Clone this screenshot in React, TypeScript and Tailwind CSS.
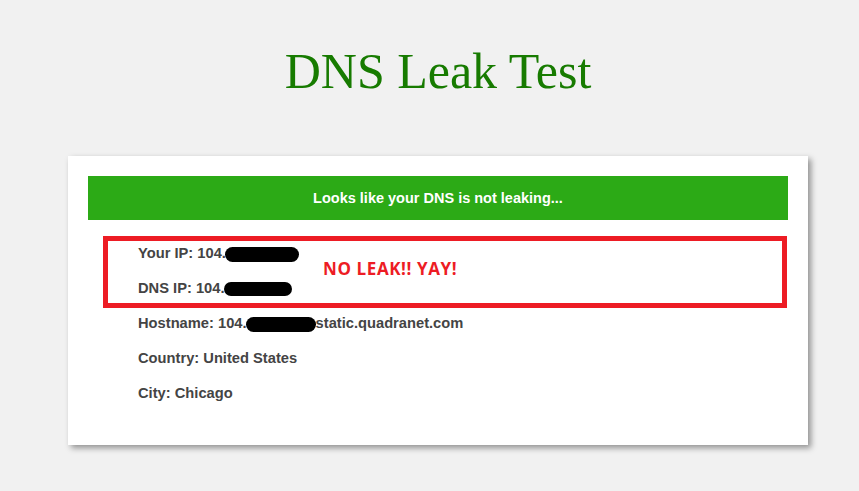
import React from "react";

function Blob({ w, h = 15, ml = 0 }: { w: number; h?: number; ml?: number }) {
  return (
    <span
      className="inline-block bg-black rounded-[8px] align-middle"
      style={{ width: w, height: h, marginLeft: ml }}
    />
  );
}

export default function App() {
  return (
    <div className="min-h-screen w-full bg-[#f1f1f1]">
      <div className="pl-[68px] pt-[42px]">
        <div className="w-[740px]">
          <h1
            className="text-center text-[50px] leading-[58px] text-[#177b00] font-normal"
            style={{ fontFamily: '"Liberation Serif", "Times New Roman", serif' }}
          >
            DNS Leak Test
          </h1>
          <div className="relative mt-[56px] bg-white px-[20px] pt-[20px] pb-[34px] shadow-[3px_3px_6px_rgba(0,0,0,0.4)]">
            <div
              className="flex h-[44px] items-center justify-center bg-[#2caa16] pt-[1px] text-[14.5px] font-bold text-white"
              style={{ fontFamily: '"Liberation Sans", Arial, sans-serif' }}
            >
              Looks like your DNS is not leaking...
            </div>
            <div
              className="mt-[16px] flex flex-col pl-[50px] text-[14.7px] font-bold text-[#444444]"
              style={{ fontFamily: '"Liberation Sans", Arial, sans-serif' }}
            >
              <div className="h-[35px] leading-[35px] whitespace-nowrap">
                Your IP: 104.<Blob w={74} ml={-1} />
              </div>
              <div className="h-[35px] leading-[35px] whitespace-nowrap">
                DNS IP: 104.<Blob w={68} h={14} ml={-1} />
              </div>
              <div className="h-[35px] leading-[35px] whitespace-nowrap">
                Hostname: 104.<Blob w={70} ml={-1} />static.quadranet.com
              </div>
              <div className="h-[35px] leading-[35px]">Country: United States</div>
              <div className="h-[35px] leading-[35px]">City: Chicago</div>
            </div>
            <div className="absolute left-[35px] top-[80px] h-[72px] w-[684px] border-[5px] border-[#ed1c24]">
              <span
                className="absolute left-[215px] top-[18px] text-[17px] font-bold leading-[20px] tracking-[0.6px] text-[#ed1c24]"
                style={{ fontFamily: '"Open Sans", "Noto Sans", sans-serif' }}
              >
                NO LEAK!! YAY!
              </span>
            </div>
          </div>
        </div>
      </div>
    </div>
  );
}
